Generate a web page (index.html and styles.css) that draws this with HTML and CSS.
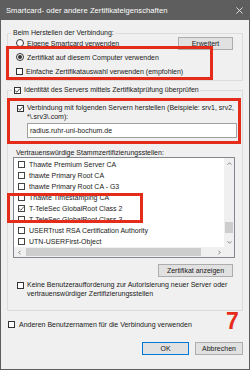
FILE: index.html
```html
<!DOCTYPE html>
<html>
<head>
<meta charset="utf-8">
<link rel="stylesheet" href="styles.css">
</head>
<body>
<div class="window">
  <div class="titlebar">
    <span class="title">Smartcard- oder andere Zertifikateigenschaften</span>
    <svg class="close" viewBox="0 0 8 8" width="7" height="7"><path d="M0.5 0.5L7.5 7.5M7.5 0.5L0.5 7.5" stroke="#fff" stroke-width="0.9" fill="none"/></svg>
  </div>
  <div class="content">
    <fieldset class="group g1">
      <legend>Beim Herstellen der Verbindung:</legend>
      <div class="g1grid">
        <div class="row r1"><span class="radio"></span><span>Eigene Smartcard verwenden</span></div>
        <button class="btn btn-erw">Erweitert</button>
        <div class="row r2"><span class="radio on"></span><span>Zertifikat auf diesem Computer verwenden</span></div>
        <div class="row r3"><span class="cb"></span><span>Einfache Zertifikatauswahl verwenden (empfohlen)</span></div>
      </div>
    </fieldset>

    <fieldset class="group g2">
      <legend><span class="cb"><svg viewBox="0 0 7 7"><path d="M1.2 3.6L2.9 5.2L5.9 1.6" stroke="#333" stroke-width="0.9" fill="none"/></svg></span><span>Identität des Servers mittels Zertifikatprüfung überprüfen</span></legend>
      <div class="servers">
        <span class="cb"><svg viewBox="0 0 7 7"><path d="M1.2 3.6L2.9 5.2L5.9 1.6" stroke="#333" stroke-width="0.9" fill="none"/></svg></span>
        <div class="servers-body">
          <div class="lines">Verbindung mit folgenden Servern herstellen (Beispiele: srv1, srv2,<br>*\.srv3\.com):</div>
          <div class="input">radius.ruhr-uni-bochum.de</div>
        </div>
      </div>
      <div class="list-label">Vertrauenswürdige Stammzertifizierungsstellen:</div>
      <div class="list">
        <div class="items">
          <div class="item"><span class="cb"></span><span>Thawte Premium Server CA</span></div>
          <div class="item"><span class="cb"></span><span>thawte Primary Root CA</span></div>
          <div class="item"><span class="cb"></span><span>thawte Primary Root CA - G3</span></div>
          <div class="item"><span class="cb"></span><span>Thawte Timestamping CA</span></div>
          <div class="item"><span class="cb"><svg viewBox="0 0 7 7"><path d="M1.2 3.6L2.9 5.2L5.9 1.6" stroke="#555" stroke-width="0.9" fill="none"/></svg></span><span>T-TeleSec GlobalRoot Class 2</span></div>
          <div class="item"><span class="cb"></span><span>T-TeleSec GlobalRoot Class 3</span></div>
          <div class="item"><span class="cb"></span><span>USERTrust RSA Certification Authority</span></div>
          <div class="item"><span class="cb"></span><span>UTN-USERFirst-Object</span></div>
        </div>
        <div class="vscroll">
          <div class="arrow"><svg viewBox="0 0 6 4" width="5" height="3"><path d="M0.5 3.5L3 1L5.5 3.5" stroke="#606060" fill="none" stroke-width="1"/></svg></div>
          <div class="vtrack"><div class="vthumb"></div></div>
          <div class="arrow"><svg viewBox="0 0 6 4" width="5" height="3"><path d="M0.5 0.5L3 3L5.5 0.5" stroke="#606060" fill="none" stroke-width="1"/></svg></div>
        </div>
        <div class="hscroll">
          <div class="arrow"><svg viewBox="0 0 4 6" width="3" height="5"><path d="M3.5 0.5L1 3L3.5 5.5" stroke="#606060" fill="none" stroke-width="1"/></svg></div>
          <div class="htrack"><div class="hthumb"></div></div>
          <div class="arrow"><svg viewBox="0 0 4 6" width="3" height="5"><path d="M0.5 0.5L3 3L0.5 5.5" stroke="#606060" fill="none" stroke-width="1"/></svg></div>
        </div>
        <div class="corner"></div>
      </div>
      <div class="btnrow"><button class="btn btn-cert">Zertifikat anzeigen</button></div>
      <div class="row multi"><span class="cb"></span><span class="lines">Keine Benutzeraufforderung zur Autorisierung neuer Server oder<br>vertrauenswürdiger Zertifizierungsstellen</span></div>
    </fieldset>

    <div class="row anderen"><span class="cb"></span><span>Anderen Benutzernamen für die Verbindung verwenden</span></div>

    <div class="footer">
      <button class="btn btn-ok">OK</button>
      <button class="btn btn-cancel">Abbrechen</button>
    </div>
  </div>

  <div class="mark mark1"></div>
  <div class="mark mark2"></div>
  <div class="mark mark3"></div>
  <div class="seven">7</div>
</div>
</body>
</html>
```

FILE: styles.css
```css
* { box-sizing: border-box; }
html, body { margin: 0; padding: 0; }
body {
  width: 250px;
  height: 370px;
  background: #ffffff;
  font-family: "Liberation Sans", Arial, sans-serif;
  font-size: 7px;
  color: #1a1a1a;
}
.window {
  position: relative;
  width: 250px;
  height: 370px;
  border: 1px solid #5e5e5e;
  background: #f0f0f0;
  display: flex;
  flex-direction: column;
}
.titlebar {
  height: 19px;
  background: #5e5e5e;
  color: #ffffff;
  display: flex;
  align-items: center;
  justify-content: space-between;
  padding: 0 5px 0 5px;
  flex: none;
}
.title {
  font-size: 7.6px;
  letter-spacing: 0.05px;
}
.close { display: block; margin-right: 1px; }

.content {
  flex: 1;
  padding: 0 6px;
  display: flex;
  flex-direction: column;
}

.group {
  margin: 0;
  border: 1px solid #dcdcdc;
  min-width: 0;
}
.group legend {
  padding: 0 1px;
  margin-left: -4px;
  line-height: 8px;
  height: 8px;
  white-space: nowrap;
}
.g1 {
  margin-top: 9px;
  padding: 0 9px 3px 8px;
}
.g1grid {
  display: grid;
  grid-template-columns: 1fr 55px;
  grid-template-rows: 12px 12px 12px;
  row-gap: 2px;
}
.r1 { grid-column: 1; grid-row: 1; }
.r2 { grid-column: 1; grid-row: 2; }
.r3 { grid-column: 1 / span 2; grid-row: 3; }
.btn-erw {
  grid-column: 2;
  grid-row: 1 / 3;
  margin-top: 7px;
  height: 13px;
}

.row {
  display: flex;
  align-items: center;
  white-space: nowrap;
  line-height: 9px;
}
.radio {
  flex: none;
  width: 8px;
  height: 8px;
  border: 1px solid #333333;
  border-radius: 50%;
  background: #ffffff;
  margin-right: 3px;
  display: flex;
  align-items: center;
  justify-content: center;
}
.radio.on::after {
  content: "";
  width: 4px;
  height: 4px;
  border-radius: 50%;
  background: #333333;
}
.cb {
  flex: none;
  width: 7px;
  height: 7px;
  border: 1px solid #333333;
  background: #ffffff;
  display: flex;
  align-items: center;
  justify-content: center;
}
.cb svg { width: 7px; height: 7px; display: block; flex: none; }
.row .cb { margin-right: 3px; }

.btn {
  font-family: inherit;
  font-size: 7px;
  color: #1a1a1a;
  background: #e1e1e1;
  border: 1px solid #adadad;
  padding: 0;
  margin: 0;
  line-height: 11px;
  text-align: center;
}

.g2 {
  margin-top: 5px;
  padding: 0 9px 12px 8px;
}
.g2 legend {
  display: flex;
  align-items: center;
}
.g2 legend .cb { margin-left: 1px; margin-right: 3px; }

.servers {
  margin-top: 9px;
  display: flex;
  align-items: flex-start;
}
.servers > .cb { margin-left: 1px; margin-top: 2px; margin-right: 3px; }
.servers-body {
  flex: 1;
  display: flex;
  flex-direction: column;
}
.lines {
  line-height: 9px;
  white-space: nowrap;
}
.input {
  margin-top: 2px;
  margin-left: 0;
  margin-right: -3px;
  height: 15px;
  border: 1px solid #a0a0a0;
  background: #ffffff;
  padding-left: 2px;
  line-height: 13px;
}

.list-label {
  margin-top: 10px;
  line-height: 9px;
  height: 9px;
  white-space: nowrap;
}
.list {
  margin-left: -3px;
  margin-right: -2px;
  height: 101px;
  border: 1px solid #828790;
  background: #ffffff;
  display: grid;
  grid-template-columns: 1fr 10px;
  grid-template-rows: 1fr 10px;
  overflow: hidden;
}
.items {
  padding-top: 1px;
  overflow: hidden;
}
.item {
  height: 11px;
  display: flex;
  align-items: center;
  padding-left: 4px;
  white-space: nowrap;
}
.item .cb { margin-right: 4px; border-color: #444; }
.vscroll {
  background: #f0f0f0;
  display: flex;
  flex-direction: column;
}
.vscroll .arrow, .hscroll .arrow {
  flex: none;
  width: 10px;
  height: 10px;
  display: flex;
  align-items: center;
  justify-content: center;
}
.arrow svg { display: block; }
.vtrack { flex: 1; padding: 0 1px; }
.vthumb {
  margin-top: 54px;
  height: 11px;
  background: #cdcdcd;
}
.hscroll {
  background: #f0f0f0;
  display: flex;
}
.htrack { flex: 1; padding: 1px 0; display: flex; }
.hthumb {
  margin-left: 2px;
  width: 175px;
  background: #cdcdcd;
}
.corner { background: #f0f0f0; }

.btnrow {
  margin-top: 6px;
  display: flex;
  justify-content: flex-end;
}
.btn-cert { width: 75px; height: 13px; }

.multi {
  margin-top: 3px;
  align-items: flex-start;
}
.multi .cb { margin-left: 1px; margin-top: 2px; }

.anderen {
  margin-top: 9px;
}
.anderen .cb { margin-left: 1px; margin-right: 4px; }

.footer {
  margin-top: 13px;
  display: flex;
  justify-content: flex-end;
  gap: 6px;
}
.btn-ok { width: 47px; height: 13px; border-color: #0078d7; }
.btn-cancel { width: 48px; height: 13px; }

.mark {
  position: absolute;
  border: 3px solid #e52b1a;
}
.mark1 { left: 5px; top: 45px; width: 207px; height: 34px; }
.mark2 { left: 6px; top: 97px; width: 234px; height: 46px; }
.mark3 { left: 6px; top: 192px; width: 136px; height: 30px; }
.seven {
  position: absolute;
  left: 225px;
  top: 309px;
  font-size: 23px;
  line-height: 23px;
  font-weight: bold;
  color: #e52b1a;
}
```
